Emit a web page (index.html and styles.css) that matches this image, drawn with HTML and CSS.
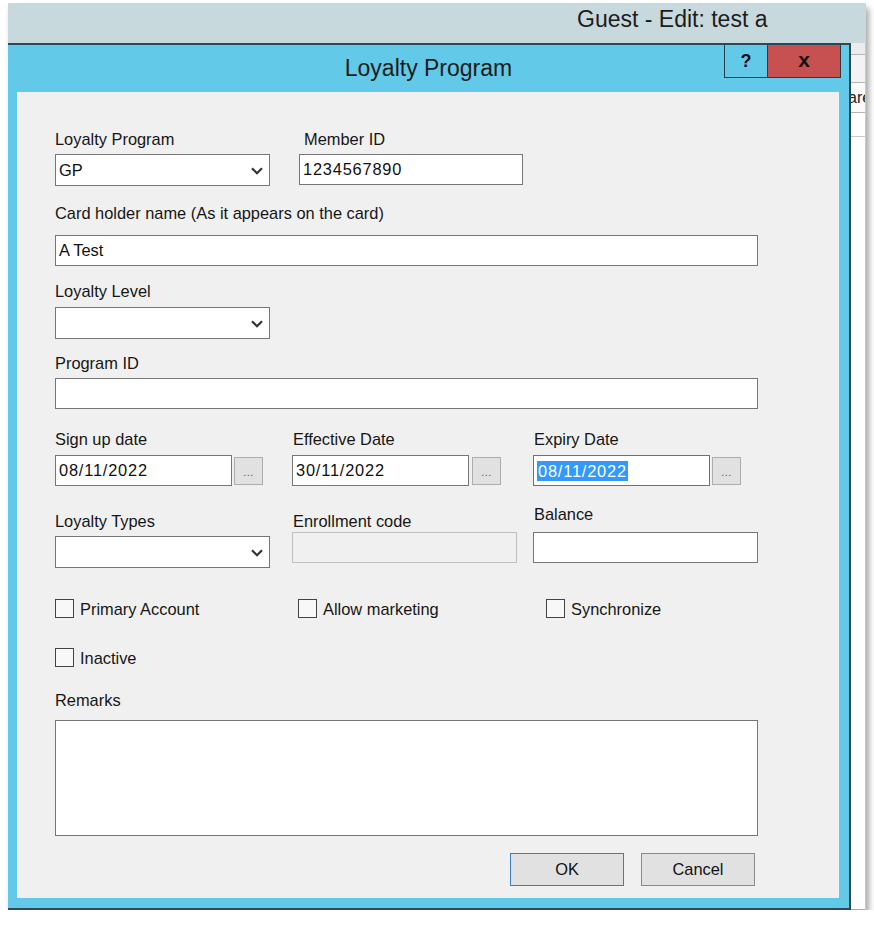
FILE: index.html
```html
<!DOCTYPE html>
<html>
<head>
<meta charset="utf-8">
<link rel="stylesheet" href="styles.css">
</head>
<body>
<div class="shot">
  <div class="topbar"><span class="toptitle">Guest - Edit: test a</span></div>
  <div class="main">
    <div class="dialog">
      <div class="titlebar">
        <div class="title">Loyalty Program</div>
        <div class="ctrls">
          <div class="help">?</div>
          <div class="close">x</div>
        </div>
      </div>
      <div class="content">
        <div class="row cols-a">
          <div class="field">
            <div class="lbl">Loyalty Program</div>
            <div class="select"><span>GP</span><svg class="chev" width="12" height="8" viewBox="0 0 12 8"><polyline points="1,1.2 6,6.2 11,1.2" fill="none" stroke="#333" stroke-width="2.2"/></svg></div>
          </div>
          <div class="field">
            <div class="lbl lbl-in">Member ID</div>
            <div class="input w224 num">1234567890</div>
          </div>
        </div>

        <div class="row r-b">
          <div class="field">
            <div class="lbl mb13">Card holder name (As it appears on the card)</div>
            <div class="input wfull">A Test</div>
          </div>
        </div>

        <div class="row r-c">
          <div class="field">
            <div class="lbl mb7">Loyalty Level</div>
            <div class="select"><span></span><svg class="chev" width="12" height="8" viewBox="0 0 12 8"><polyline points="1,1.2 6,6.2 11,1.2" fill="none" stroke="#333" stroke-width="2.2"/></svg></div>
          </div>
        </div>

        <div class="row r-d">
          <div class="field">
            <div class="lbl">Program ID</div>
            <div class="input wfull"></div>
          </div>
        </div>

        <div class="row r-e cols-3">
          <div class="field">
            <div class="lbl mb7">Sign up date</div>
            <div class="dategroup"><div class="input w177 num">08/11/2022</div><div class="dots">...</div></div>
          </div>
          <div class="field">
            <div class="lbl lbl-in1 mb7">Effective Date</div>
            <div class="dategroup"><div class="input w177 num">30/11/2022</div><div class="dots dots-3">...</div></div>
          </div>
          <div class="field">
            <div class="lbl lbl-in1 mb7">Expiry Date</div>
            <div class="dategroup"><div class="input w177 num focus"><span class="sel">08/11/2022</span></div><div class="dots">...</div></div>
          </div>
        </div>

        <div class="row r-f cols-3">
          <div class="field mt7">
            <div class="lbl">Loyalty Types</div>
            <div class="select"><span></span><svg class="chev" width="12" height="8" viewBox="0 0 12 8"><polyline points="1,1.2 6,6.2 11,1.2" fill="none" stroke="#333" stroke-width="2.2"/></svg></div>
          </div>
          <div class="field mt7">
            <div class="lbl lbl-in1 mb2">Enrollment code</div>
            <div class="input w225 disabled"></div>
          </div>
          <div class="field">
            <div class="lbl lbl-in1 mb9">Balance</div>
            <div class="input w225"></div>
          </div>
        </div>

        <div class="row r-g cols-chk">
          <div class="chk"><div class="box"></div><span>Primary Account</span></div>
          <div class="chk"><div class="box"></div><span>Allow marketing</span></div>
          <div class="chk"><div class="box"></div><span>Synchronize</span></div>
        </div>

        <div class="row r-h">
          <div class="chk"><div class="box"></div><span>Inactive</span></div>
        </div>

        <div class="row r-i">
          <div class="field">
            <div class="lbl mb11">Remarks</div>
            <div class="textarea"></div>
          </div>
        </div>

        <div class="row r-j">
          <div class="btn btn-default">OK</div>
          <div class="btn">Cancel</div>
        </div>
      </div>
    </div>
    <div class="strip">
      <div class="s1"></div>
      <div class="s2"></div>
      <div class="s3"><span>are</span></div>
      <div class="s4"></div>
      <div class="s5"></div>
    </div>
  </div>
</div>
</body>
</html>
```

FILE: styles.css
```css
* { box-sizing: border-box; }
html, body { margin: 0; padding: 0; background: #fff; }
body { font-family: "Liberation Sans", Arial, sans-serif; color: #111; }

.shot {
  margin: 3px 0 0 8px;
  width: 858px;
  height: 907px;
  display: flex;
  flex-direction: column;
  background: #fff;
  box-shadow: 3px 5px 6px rgba(0,0,0,0.35);
}
.topbar {
  flex: none;
  height: 40px;
  background: #c8d9de;
  padding: 3px 0 0 569px;
}
.toptitle { font-size: 23px; line-height: 26px; color: #1c1c1c; }

.main { flex: 1; display: flex; min-width: 0; }

.dialog {
  width: 843px;
  flex: none;
  display: flex;
  flex-direction: column;
  background: #62c9e9;
  border-top: 2px solid #2c4955;
  border-right: 2px solid #2c4955;
  border-bottom: 2px solid #2c4955;
  padding: 0 10px 10px 9px;
}
.titlebar {
  position: relative;
  height: 47px;
  margin: 0 -10px 0 -9px;
  flex: none;
}
.title {
  text-align: center;
  font-size: 23px;
  line-height: 47px;
  color: #1c1c1c;
}
.ctrls {
  position: absolute;
  top: 0;
  right: 8px;
  display: flex;
}
.help, .close {
  height: 33px;
  display: flex;
  align-items: center;
  justify-content: center;
  font-weight: bold;
  color: #111;
  border: 1px solid #2a3c46;
  border-top: 0;
}
.help { width: 44px; font-size: 18px; background: #62c9e9; }
.close { width: 73px; font-size: 21px; background: #c75050; border-left: 0; padding-bottom: 3px; }

.content {
  flex: 1;
  background: #f0f0f0;
  padding: 38px 0 0 38px;
}

.row { display: flex; align-items: flex-start; }
.cols-a { display: grid; grid-template-columns: 244px 224px; }
.cols-3 { display: grid; grid-template-columns: 237px 241px 225px; align-items: start; }
.cols-chk { display: grid; grid-template-columns: 243px 248px auto; }

.r-b { margin-top: 18px; }
.r-c { margin-top: 16px; }
.r-d { margin-top: 15px; }
.r-e { margin-top: 21px; }
.r-f { margin-top: 19px; }
.r-g { margin-top: 31px; }
.r-h { margin-top: 30px; }
.r-i { margin-top: 24px; }
.r-j { margin-top: 17px; width: 700px; justify-content: flex-end; gap: 17px; }

.field { display: flex; flex-direction: column; }
.mt7 { margin-top: 7px; }

.lbl {
  font-size: 16.4px;
  line-height: 18px;
  color: #161616;
  margin-bottom: 6px;
  white-space: nowrap;
}
.lbl-in { padding-left: 5px; }
.lbl-in1 { padding-left: 1px; }
.mb2 { margin-bottom: 2px; }
.mb7 { margin-bottom: 7px; }
.mb9 { margin-bottom: 9px; }
.mb11 { margin-bottom: 11px; }
.mb13 { margin-bottom: 13px; }

.select {
  width: 215px;
  height: 32px;
  background: #fff;
  border: 1px solid #767676;
  display: flex;
  align-items: center;
  justify-content: space-between;
  padding: 0 6px 0 3px;
  font-size: 16.4px;
  color: #111;
}
.chev { display: block; margin-top: 1px; }

.input {
  height: 31px;
  background: #fff;
  border: 1px solid #767676;
  display: flex;
  align-items: center;
  padding-left: 3px;
  font-size: 16.4px;
  color: #111;
  white-space: nowrap;
}
.num { letter-spacing: 0.8px; }
.w177 { width: 177px; }
.w224 { width: 224px; }
.w225 { width: 225px; }
.wfull { width: 703px; }
.input.disabled { background: #f0f0f0; border-color: #bfbfbf; }
.input.focus { border-color: #3d7bbd; }
.sel {
  background: #3399ff;
  color: #fff;
  line-height: 20px;
  padding: 0 1px;
}

.dategroup { display: flex; align-items: center; }
.dots {
  width: 29px;
  height: 28px;
  margin-left: 2px;
  background: #e1e1e1;
  border: 1px solid #adadad;
  display: flex;
  align-items: flex-end;
  justify-content: center;
  padding-bottom: 6px;
  font-size: 11px;
  line-height: 11px;
  color: #555;
  letter-spacing: 0.5px;
}
.dots-3 { margin-left: 3px; }

.chk { display: flex; align-items: center; gap: 6px; height: 19px; }
.box {
  width: 19px;
  height: 19px;
  border: 1px solid #444;
  background: #f8f8f8;
  flex: none;
}
.chk span { font-size: 16.4px; line-height: 18px; color: #161616; }

.textarea {
  width: 703px;
  height: 116px;
  background: #fff;
  border: 1px solid #767676;
}

.btn {
  width: 114px;
  height: 33px;
  background: #e1e1e1;
  border: 1px solid #8a8a8a;
  display: flex;
  align-items: center;
  justify-content: center;
  font-size: 16.4px;
  color: #111;
}
.btn-default { border-color: #3a7ebf; }

.strip {
  flex: 1 1 0;
  min-width: 0;
  width: 15px;
  overflow: hidden;
  display: flex;
  flex-direction: column;
  background: #fff;
  border-right: 1px solid #c9c9c9;
}
.s1 { height: 12px; background: #ececec; border-bottom: 1px solid #b5b5b5; }
.s2 { height: 28px; background: #f3f3f3; border-bottom: 1px solid #b5b5b5; }
.s3 { height: 30px; background: #fafafa; border-bottom: 1px solid #b5b5b5; overflow: hidden; display: flex; align-items: center; white-space: nowrap; }
.s3 span { font-size: 16px; margin-left: -3px; color: #222; }
.s4 { height: 24px; border-bottom: 1px solid #c9c9c9; }
.s5 { flex: 1; border-bottom: 1px solid #a9a9a9; }
```
